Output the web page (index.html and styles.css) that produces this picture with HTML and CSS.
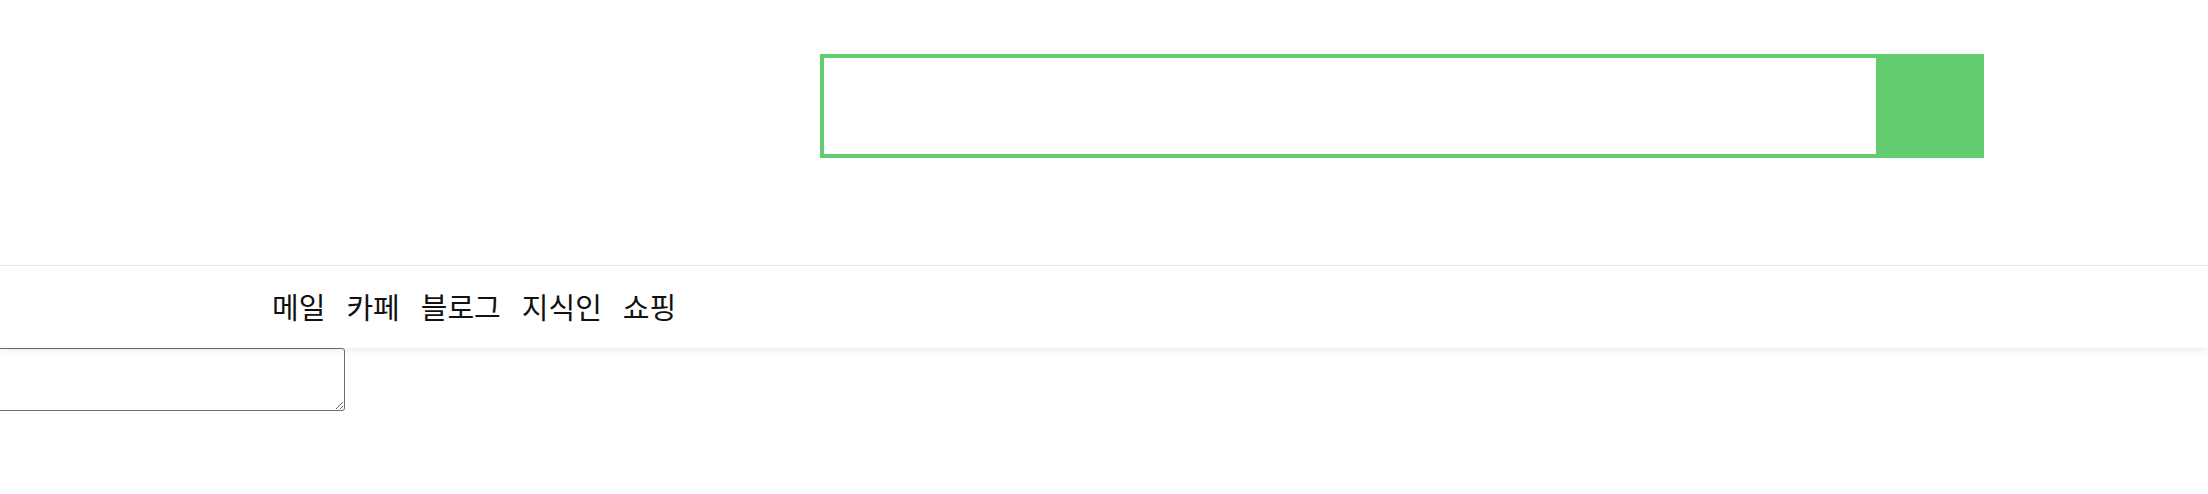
FILE: index.html
```html
<!DOCTYPE html>
<html lang="ko">
<head>
<meta charset="UTF-8">
<meta name="viewport" content="width=device-width, initial-scale=1.0">
<title>검색</title>
<link rel="stylesheet" href="styles.css">
</head>
<body>
    <header class="top">
        <form class="search">
            <input type="text" class="search-input" name="query">
            <button type="button" class="search-btn"></button>
        </form>
    </header>

    <nav class="menu">
        <ul class="menu-list">
            <li>메일</li>
            <li>카페</li>
            <li>블로그</li>
            <li>지식인</li>
            <li>쇼핑</li>
        </ul>
    </nav>

    <textarea class="memo"></textarea>
</body>
</html>
```

FILE: styles.css
```css
body {
    margin: 0;
    padding: 0;
    background-color: #ffffff;
    font-family: "Noto Sans CJK KR", "Noto Sans", sans-serif;
    overflow: hidden;
}

.top {
    height: 265px;
    box-sizing: border-box;
    padding-top: 54px;
    padding-left: 820px;
}

.search {
    display: flex;
    width: 1164px;
    height: 104px;
}

.search-input {
    flex: 1;
    height: 104px;
    box-sizing: border-box;
    border: 4px solid #62cc6e;
    border-right: none;
    outline: none;
    margin: 0;
    padding: 0 16px;
    font-size: 28px;
}

.search-btn {
    width: 108px;
    height: 104px;
    border: none;
    margin: 0;
    background-color: #62cc6e;
}

.menu {
    height: 83px;
    box-sizing: border-box;
    border-top: 1px solid #e3e7ea;
    box-shadow: 0 3px 6px rgba(0, 0, 0, 0.07);
    display: flex;
    align-items: center;
    padding-left: 272px;
    position: relative;
}

.menu-list {
    display: flex;
    gap: 21px;
    list-style: none;
    margin: 0;
    padding: 0 0 2px;
    font-size: 29px;
    color: #111111;
}

.memo {
    display: block;
    width: 385px;
    height: 63px;
    margin-left: -40px;
    box-sizing: border-box;
    border: 1px solid #6f6f6f;
    border-radius: 3px;
}
```
